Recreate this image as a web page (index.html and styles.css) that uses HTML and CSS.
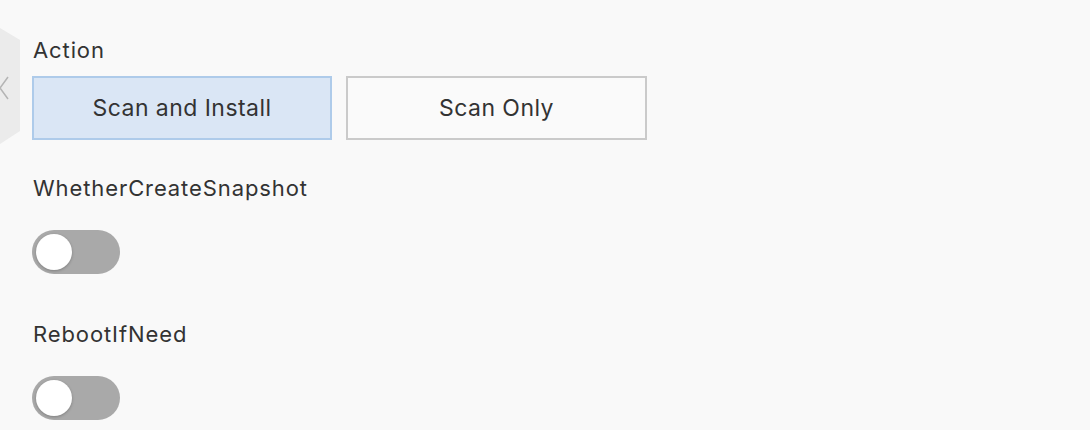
FILE: index.html
```html
<!DOCTYPE html>
<html lang="en">
<head>
    <meta charset="UTF-8">
    <meta name="viewport" content="width=device-width, initial-scale=1.0">
    <title>Patch Settings</title>
    <link rel="stylesheet" href="styles.css">
</head>
<body>
    <!-- collapsed side panel handle -->
    <div class="side-handle">
        <svg width="22" height="118" viewBox="0 0 22 118">
            <polygon points="0,0 20,12 20,103 0,116" fill="#ebebeb" />
            <polyline points="8,49 0,60 8,71" fill="none" stroke="#b4b4b4" stroke-width="1.5" />
        </svg>
    </div>
    <div class="form">
        <div class="field">
            <label class="field-label">Action</label>
            <div class="choice-group">
                <button class="choice selected">Scan and Install</button>
                <button class="choice">Scan Only</button>
            </div>
        </div>
        <div class="field toggle-field">
            <label class="field-label">WhetherCreateSnapshot</label>
            <span class="switch"><span class="knob"></span></span>
        </div>
        <div class="field toggle-field">
            <label class="field-label">RebootIfNeed</label>
            <span class="switch"><span class="knob"></span></span>
        </div>
    </div>
</body>
</html>
```

FILE: styles.css
```css
body {
    margin: 0;
    height: 100vh;
    overflow: hidden;
    background-color: #f9f9f9;
    font-family: Inter, "Liberation Sans", sans-serif;
    color: #333;
    position: relative;
}
.side-handle {
    position: absolute;
    top: 28px;
    left: 0;
    line-height: 0;
}
.form {
    display: flex;
    flex-direction: column;
    padding: 36px 0 0 32px;
    gap: 34px;
}
.field {
    display: flex;
    flex-direction: column;
    align-items: flex-start;
}
.toggle-field {
    margin-bottom: 12px;
}
.field-label {
    font-size: 22px;
    line-height: 28px;
    letter-spacing: 0.9px;
    margin-left: 1px;
    margin-bottom: 12px;
}
.choice-group {
    display: flex;
    gap: 14px;
}
.choice {
    width: 301px;
    height: 64px;
    font-family: inherit;
    font-size: 23px;
    letter-spacing: 0.45px;
    color: #333;
    background: #fafafa;
    border: 2px solid #cacaca;
    padding: 0;
}
.choice.selected {
    width: 300px;
    background: #dae6f5;
    border-color: #aecbea;
}
.switch {
    display: flex;
    align-items: center;
    width: 88px;
    height: 44px;
    border-radius: 22px;
    background: #a9a9a9;
    margin-top: 16px;
    padding: 0 4px;
    box-sizing: border-box;
}
.knob {
    width: 36px;
    height: 36px;
    border-radius: 50%;
    background: #fff;
    box-shadow: 0 1px 3px rgba(0, 0, 0, 0.25);
}
```
